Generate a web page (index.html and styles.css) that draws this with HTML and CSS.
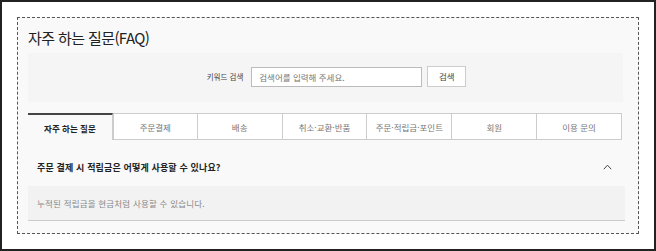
FILE: index.html
```html
<!DOCTYPE html>
<html lang="ko">
<head>
<meta charset="utf-8">
<title>FAQ</title>
<link rel="stylesheet" href="styles.css">
</head>
<body>
<div class="frame">
  <div class="board">
    <h1 class="title">자주 하는 질문(FAQ)</h1>
    <div class="search">
      <span class="search-label">키워드 검색</span>
      <div class="search-input">검색어를 입력해 주세요.</div>
      <div class="search-btn">검색</div>
    </div>
    <ul class="tabs">
      <li class="tab active">자주 하는 질문</li>
      <li class="tab">주문결제</li>
      <li class="tab">배송</li>
      <li class="tab">취소·교환·반품</li>
      <li class="tab">주문·적립금·포인트</li>
      <li class="tab">회원</li>
      <li class="tab">이용 문의</li>
    </ul>
    <div class="faq">
      <div class="question">
        <span>주문 결제 시 적립금은 어떻게 사용할 수 있나요?</span>
        <svg class="chev" width="9" height="6" viewBox="0 0 9 6"><path d="M0.8 5.2 L4.5 1.2 L8.2 5.2" fill="none" stroke="#444" stroke-width="1"/></svg>
      </div>
      <div class="answer">누적된 적립금을 현금처럼 사용할 수 있습니다.</div>
    </div>
  </div>
</div>
</body>
</html>
```
FILE: styles.css
```css
* { box-sizing: border-box; }
html, body { margin: 0; padding: 0; background: #fff; }
body {
  font-family: "Noto Sans CJK KR", "Noto Sans", sans-serif;
  color: #222;
}
.frame {
  width: 656px;
  height: 251px;
  border: 2px solid #222;
  padding: 15px 0 0 15px;
}
.board {
  width: 622px;
  height: 217px;
  border: 1px dashed #555;
  background: #f9f9f9;
  padding: 0 15px 0 10px;
}
.title {
  margin: 0;
  padding-top: 9px;
  font-size: 15px;
  line-height: 22px;
  font-weight: 400;
  color: #222;
  letter-spacing: -0.6px;
}
.search {
  margin-top: 4px;
  height: 49px;
  background: #f5f5f5;
  display: flex;
  align-items: center;
  justify-content: center;
  padding-left: 22px;
  padding-bottom: 2px;
}
.search-label {
  font-size: 7.5px;
  color: #444;
  margin-right: 8px;
}
.search-input {
  width: 171px;
  height: 20px;
  border: 1px solid #bbb;
  background: #fff;
  font-size: 8.5px;
  color: #777;
  line-height: 18px;
  padding-left: 7px;
}
.search-btn {
  width: 39px;
  height: 21px;
  margin-left: 5px;
  border: 1px solid #ccc;
  background: #fff;
  font-size: 8.5px;
  color: #444;
  text-align: center;
  line-height: 19px;
}
.tabs {
  list-style: none;
  margin: 11px 0 0 0;
  padding: 0;
  display: grid;
  grid-template-columns: repeat(7, 1fr);
  width: 594px;
  height: 27px;
}
.tab {
  border-top: 1px solid #ccc;
  border-right: 1px solid #ccc;
  border-bottom: 1px solid #ccc;
  background: #fff;
  font-size: 8.5px;
  color: #777;
  display: flex;
  align-items: center;
  justify-content: center;
  padding-top: 1px;
}
.tab.active {
  border-top: 2px solid #444;
  border-bottom: none;
  background: #f9f9f9;
  color: #222;
  font-weight: 700;
  padding-top: 0;
}
.tab:nth-child(2) { border-left: 1px solid #ccc; }
.faq {
  width: 597px;
  border-bottom: 1px solid #ccc;
}
.question {
  height: 46px;
  display: flex;
  align-items: center;
  justify-content: space-between;
  padding: 8px 13px 0 9px;
  font-size: 9px;
  font-weight: 700;
  color: #222;
  letter-spacing: 0.15px;
}
.chev { display: block; }
.answer {
  height: 34px;
  background: #f2f2f2;
  font-size: 8.5px;
  color: #888;
  padding-left: 9px;
  letter-spacing: 0.2px;
  display: flex;
  align-items: center;
}
```
